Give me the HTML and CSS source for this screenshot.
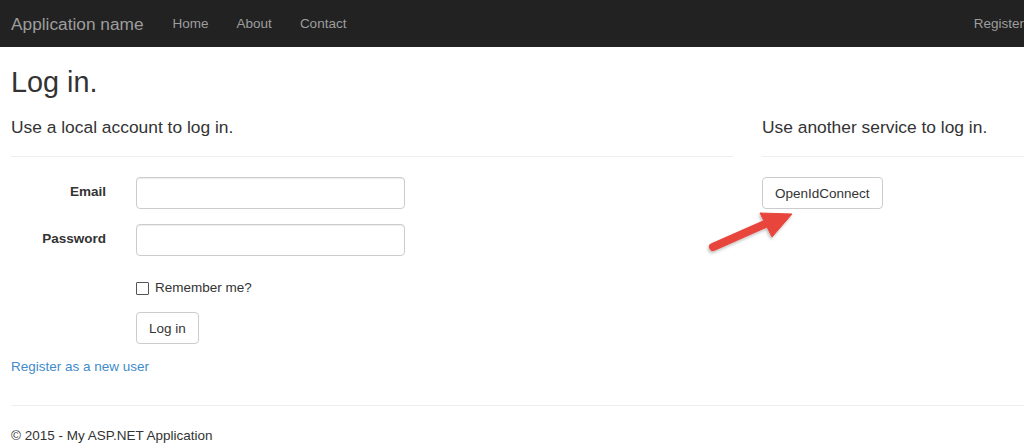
FILE: index.html
```html
<!DOCTYPE html>
<html lang="en">
	<head>
		<meta charset="UTF-8" />
		<title>Log in - My ASP.NET Application</title>
		<link rel="stylesheet" href="styles.css">
	</head>
	<body>
		<div class="navbar">
			<a class="brand" href="#">Application name</a>
			<a class="nav-link" href="#">Home</a>
			<a class="nav-link" href="#">About</a>
			<a class="nav-link" href="#">Contact</a>
			<a class="nav-link nav-right" href="#">Register</a>
		</div>

		<div class="body-content">
			<h2>Log in.</h2>
			<div class="row">
				<div class="col-left">
					<h4>Use a local account to log in.</h4>
					<hr />
					<form class="form-horizontal">
						<div class="form-group">
							<label class="control-label">Email</label>
							<input class="form-control" type="text" />
						</div>
						<div class="form-group">
							<label class="control-label">Password</label>
							<input class="form-control" type="password" />
						</div>
						<div class="form-group offset">
							<label class="checkbox"><input type="checkbox" /> Remember me?</label>
						</div>
						<div class="form-group offset">
							<button class="btn" type="button">Log in</button>
						</div>
					</form>
					<p class="register"><a href="#">Register as a new user</a></p>
				</div>
				<div class="col-right">
					<h4>Use another service to log in.</h4>
					<hr />
					<button class="btn" type="button">OpenIdConnect</button>
				</div>
			</div>
			<hr class="footer-line" />
			<footer>
				<p>&copy; 2015 - My ASP.NET Application</p>
			</footer>
		</div>

		<!-- стрелка-пометка поверх скриншота -->
		<svg class="arrow" width="110" height="60" viewBox="0 0 110 60">
			<defs>
				<filter id="shadow" x="-20%" y="-20%" width="140%" height="160%">
					<feDropShadow dx="-1" dy="2" stdDeviation="1.5" flood-color="#000" flood-opacity="0.25" />
				</filter>
			</defs>
			<g filter="url(#shadow)" fill="#e8453c" stroke="#e8453c">
				<line x1="13" y1="47" x2="72" y2="21" stroke-width="8" stroke-linecap="round" />
				<polygon points="60,13 92,14 72,37" stroke-width="1" stroke-linejoin="round" />
			</g>
		</svg>
	</body>
</html>
```

FILE: styles.css
```css
html,
body {
	margin: 0;
	padding: 0;
	overflow: hidden;
}

body {
	position: relative;
	width: 1024px;
	height: 444px;
	font-family: "Liberation Sans", Arial, sans-serif;
	font-size: 13.5px;
	line-height: 20px;
	color: #333;
	background: #fff;
}

a {
	text-decoration: none;
}

.navbar {
	display: flex;
	align-items: center;
	height: 47px;
	padding-left: 11px;
	background-color: #222;
}

.brand {
	font-size: 17.3px;
	line-height: 20px;
	color: #9d9d9d;
	padding-right: 15px;
}

.nav-link {
	color: #9d9d9d;
	padding: 0 14px;
}

.nav-right {
	margin-left: auto;
	margin-right: -14px;
}

.body-content {
	padding: 0 0 0 11px;
}

h2 {
	margin: 19px 0 0;
	font-size: 28.8px;
	font-weight: 400;
	line-height: 33px;
}

h4 {
	margin: 19px 0 0;
	font-size: 17.4px;
	font-weight: 400;
	line-height: 19px;
}

hr {
	margin: 19px 0 20px;
	border: 0;
	border-top: 1px solid #eee;
}

.row {
	display: flex;
	gap: 29px;
	width: 1120px;
}

.col-left {
	width: 722px;
}

.col-right {
	width: 369px;
}

.form-group {
	display: flex;
	margin-bottom: 15px;
}

.control-label {
	width: 95px;
	margin-right: 30px;
	padding-top: 5px;
	text-align: right;
	font-weight: bold;
}

.offset {
	padding-left: 125px;
}

.form-control {
	box-sizing: border-box;
	width: 269px;
	height: 32px;
	margin: 0;
	padding: 6px 12px;
	border: 1px solid #ccc;
	border-radius: 4px;
	box-shadow: inset 0 1px 1px rgba(0, 0, 0, 0.075);
	font: inherit;
}

.checkbox {
	display: flex;
	align-items: center;
	padding-top: 7px;
	margin-bottom: -1px;
}

.checkbox input {
	appearance: none;
	width: 13px;
	height: 13px;
	margin: 0 6px 0 0;
	border: 1px solid #555;
	border-radius: 1px;
	background: #fff;
}

.btn {
	box-sizing: border-box;
	height: 32px;
	padding: 6px 12px;
	border: 1px solid #ccc;
	border-radius: 4px;
	background: #fff;
	color: #333;
	font: inherit;
	cursor: pointer;
}

.register {
	margin: -2px 0 0;
}

.register a {
	color: #428bca;
}

.footer-line {
	width: 1120px;
	margin: 28px 0 20px;
}

footer p {
	margin: 0;
}

.arrow {
	position: absolute;
	left: 700px;
	top: 200px;
}
```
